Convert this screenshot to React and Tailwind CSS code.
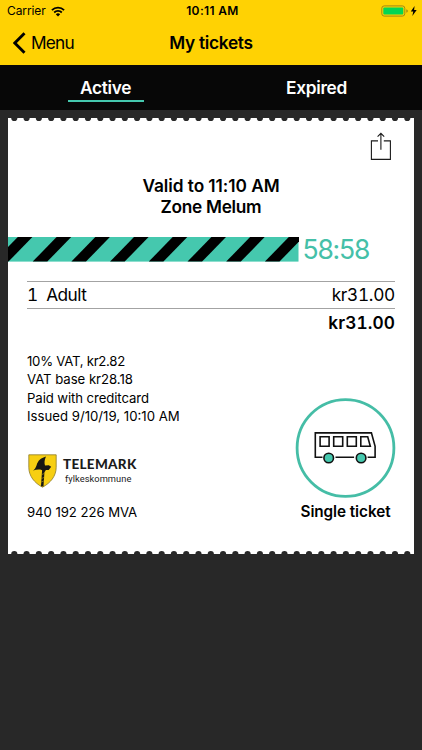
import { useState } from "react";

const STRIPES = [-20.2, 18.6, 57.3, 96, 134.7, 173.4, 212.1, 250.8];
const NOTCHES = Array.from({ length: 33 }, (_, i) => 6.3 + i * 12.28);

const StatusBar = () => (
  <div className="grid h-[22px] grid-cols-3 items-center text-[12px] leading-[22px]">
    <div className="flex items-center pl-[7px]">
      <span className="w-[38px] tracking-[-0.1px] whitespace-nowrap">Carrier</span>
      <svg width="14" height="11" viewBox="0 0 14 11" className="ml-[6px]">
        <g fill="none" stroke="#000" strokeWidth="1.8">
          <path d="M.9 4.1a8.7 8.7 0 0 1 12.2 0" />
          <path d="M3.2 6.5a5.4 5.4 0 0 1 7.6 0" />
        </g>
        <path d="M4.8 8.3a3.1 3.1 0 0 1 4.4 0L7 10.5z" />
      </svg>
    </div>
    <div className="pl-[3px] text-center font-semibold tracking-[0.35px] whitespace-nowrap">
      10:11 AM
    </div>
    <div className="flex justify-end pr-[4px]">
      <svg width="37" height="12" viewBox="0 0 37 12">
        <rect
          x=".8"
          y=".9"
          width="23"
          height="10.2"
          rx="2.4"
          fill="none"
          stroke="#a18a14"
        />
        <rect x="2.3" y="2.4" width="20" height="7.2" rx="1" fill="#04d654" />
        <path d="M25.3 4.3q1.6.4 1.6 1.7t-1.6 1.7z" fill="#a18a14" />
        <path d="M33.6 1 29.8 6.6h2.5L31.3 11l4.4-6h-2.6z" />
      </svg>
    </div>
  </div>
);

const Perforation = ({ bottom }) => (
  <svg
    width="406"
    height="4"
    viewBox="0 0 406 4"
    className={`block ${bottom ? "-scale-y-100" : ""}`}
  >
    {NOTCHES.map((x) => (
      <circle key={x} cx={x} cy="0" r="3.1" fill="#282828" />
    ))}
  </svg>
);

const ShareIcon = () => (
  <svg
    width="22"
    height="29"
    viewBox="0 0 22 29"
    fill="none"
    stroke="#1a1a1a"
    strokeWidth="1.1"
  >
    <path d="M8 8.9H1.4v18.5h19V8.9h-6.6M10.9 17.8V1.3M7.6 4.7l3.3-3.4 3.3 3.4" />
  </svg>
);

const Countdown = () => (
  <div className="flex h-[25px] items-center">
    <svg width="290.5" height="25" viewBox="0 0 290.5 25" className="block shrink-0">
      <rect width="290.5" height="24.6" fill="#45c8ae" />
      {STRIPES.map((x) => (
        <polygon
          key={x}
          points={`${x + 30},0 ${x + 44.6},0 ${x + 20.7},24.6 ${x + 6.1},24.6`}
        />
      ))}
    </svg>
    <span className="ml-[4px] text-[26.5px] leading-[25px] tracking-[-1.2px] whitespace-nowrap text-[#45c0a8]">
      58:58
    </span>
  </div>
);

const Logo = () => (
  <div className="flex h-[34px] items-start">
    <svg width="29" height="34" viewBox="0 0 29 34">
      <path
        d="M.8.8h27.4v12.5C28.2 22 22.5 29 14.5 33.2 6.5 29 .8 22 .8 13.3z"
        fill="#f7cf12"
        stroke="#8b7a2c"
        strokeWidth=".8"
      />
      <path
        d="M18 2.6C12.5 4.2 10 6.8 8.6 11.2 7.9 13.4 6.8 15 5.2 16.6c3-1.3 6.2-1.3 8.4-.7l3 2 1.3-1.9 2.8.1 2.5-3.3-2.4-1.5-3.8.3c-.8-2.7-.6-5.500 1-9z"
        fill="#171713"
      />
      <path d="M15.4 15.5 14.2 32.3" stroke="#171713" strokeWidth="2.5" />
      <path
        d="m13.8 20.5 2.5-1M13.5 24.5l2.5-1M13.2 28l2.5-1"
        stroke="#c5a41b"
        strokeWidth=".6"
      />
    </svg>
    <div className="ml-[6px] pt-[2px] text-[#1b1b1b]">
      <div className="font-['Lato',sans-serif] text-[13.5px] leading-[17px] font-black tracking-[0.3px] whitespace-nowrap">
        TELEMARK
      </div>
      <div className="pl-[2px] font-['Roboto',sans-serif] text-[9.3px] leading-[11px] tracking-[0.05px] whitespace-nowrap">
        fylkeskommune
      </div>
    </div>
  </div>
);

const BusIcon = () => (
  <svg width="101" height="100" viewBox="0 0 101 100" className="block">
    <circle cx="50.5" cy="50" r="48.4" fill="none" stroke="#45bda6" strokeWidth="2.8" />
    <g fill="none" stroke="#111" strokeWidth="1.6">
      <path d="M27.5 59.2h-7.2V34.9h56.1l3.7 13.5v10.8h-7.5M40.5 59.2h18.6" />
      <path d="M25.1 38.8h9v9.4h-9zM38.7 38.8h9v9.4h-9zM52.3 38.8h9v9.4h-9zM65.8 38.8h6.9l2.6 9.4h-9.5z" />
      <circle cx="33.7" cy="60" r="4.8" fill="#45c8ae" />
      <circle cx="66.1" cy="60" r="4.8" fill="#45c8ae" />
    </g>
  </svg>
);

const Ticket = () => (
  <div className="mx-[8px] mt-[8px] flex h-[436px] w-[406px] flex-col bg-white">
    <Perforation />
    <div className="flex justify-end pt-[10px] pr-[22px]">
      <ShareIcon />
    </div>
    <div className="mt-[14px] h-[62px] text-center text-[17.3px] leading-[21px] font-semibold">
      <div className="tracking-[-0.07px]">Valid to 11:10 AM</div>
      <div className="tracking-[-0.3px]">Zone Melum</div>
    </div>
    <Countdown />
    <div className="mt-[19px] ml-[19px] flex h-[28px] w-[368px] items-center justify-between border-y border-[#a3a3a3] text-[17.3px]">
      <span className="flex gap-[8px] tabular-nums">
        <span>1</span>
        <span className="tracking-[-0.55px]">Adult</span>
      </span>
      <span className="tracking-[-0.3px] tabular-nums">kr31.00</span>
    </div>
    <div className="mr-[19px] h-[28px] text-right text-[17.3px] leading-[28px] font-semibold tracking-[0.1px] tabular-nums">
      kr31.00
    </div>
    <div className="ml-[19px] flex justify-between">
      <div className="flex flex-col whitespace-nowrap">
        <div className="mt-[15px] text-[13.2px] leading-[18.4px]">
          <p className="tracking-[-0.27px]">10% VAT, kr2.82</p>
          <p className="tracking-[-0.05px]">VAT base kr28.18</p>
          <p className="tracking-[-0.1px]">Paid with creditcard</p>
          <p>Issued 9/10/19, 10:10 AM</p>
        </div>
        <div className="mt-[28px] ml-px">
          <Logo />
        </div>
        <p className="mt-[15px] text-[13.2px] leading-[18px] tracking-[-0.07px]">
          940 192 226 MVA
        </p>
      </div>
      <div className="mt-[60.5px] mr-[18px] flex w-[101px] flex-col items-center">
        <BusIcon />
        <p className="mt-[4.5px] text-[15.3px] leading-[20px] font-semibold tracking-[-0.07px] whitespace-nowrap">
          Single ticket
        </p>
      </div>
    </div>
    <div className="mt-auto">
      <Perforation bottom />
    </div>
  </div>
);

const App = () => {
  const [tab, setTab] = useState("active");

  return (
    <div className="h-[750px] w-[422px] overflow-hidden bg-[#282828] font-['Inter',sans-serif] text-black">
      <header className="h-[65px] bg-[#ffd203]">
        <StatusBar />
        <div className="grid h-[42px] grid-cols-3 items-center text-[17.3px]">
          <button className="flex items-center pl-[13px]">
            <svg width="13" height="22" viewBox="0 0 13 22" fill="none">
              <path d="M11.5 1.2 1.8 11l9.7 9.8" stroke="#000" strokeWidth="2.9" />
            </svg>
            <span className="ml-[5px] tracking-[-0.8px]">Menu</span>
          </button>
          <h1 className="text-center font-semibold tracking-[-0.3px] whitespace-nowrap">
            My tickets
          </h1>
        </div>
      </header>
      <nav className="grid h-[45px] grid-cols-2 justify-items-center bg-[#070707] text-[17.3px] font-semibold text-white">
        {["active", "expired"].map((name) => (
          <button
            key={name}
            onClick={() => setTab(name)}
            className={`mt-[12px] h-[25px] w-[76px] border-b-2 pb-[3px] leading-[22px] tracking-[-0.3px] capitalize ${
              tab === name ? "border-[#45c8ae]" : "border-transparent"
            }`}
          >
            {name}
          </button>
        ))}
      </nav>
      <Ticket />
    </div>
  );
};

export default App;
